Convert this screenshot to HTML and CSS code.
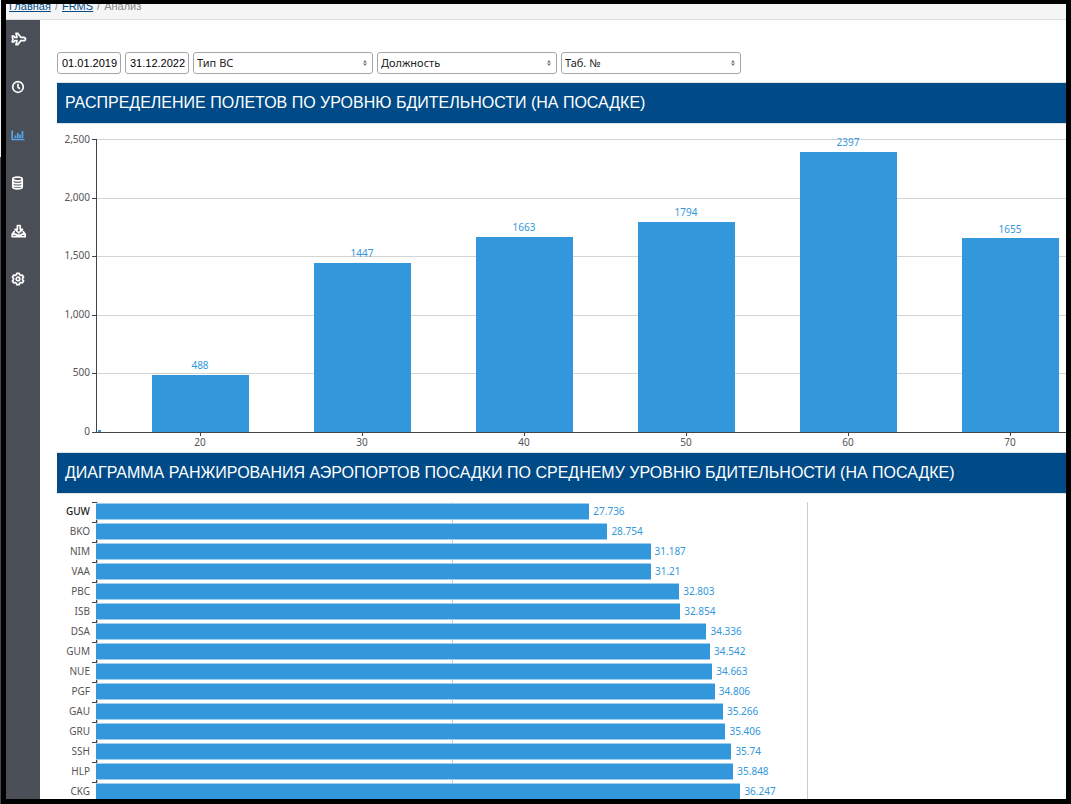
FILE: index.html
```html
<!DOCTYPE html>
<html lang="ru">
<head>
<meta charset="utf-8">
<title>FRMS — Анализ</title>
<link rel="stylesheet" href="styles.css">
</head>
<body>
<div class="window">
  <div class="screen">
    <nav class="breadcrumb" aria-label="Навигация">
      <a href="#">Главная</a><span>/</span><a href="#">FRMS</a><span>/</span><span>Анализ</span>
    </nav>
    <div class="layout">
      <nav class="sidebar" aria-label="Разделы">
        <a href="#" aria-label="Полеты"><svg viewBox="0 0 16 16"><path d="M1.200 5h1.500l1.300 1.500h2L5 2.300h1.700l3 4h2.800c1 0 2 .9 2 1.700s-1 1.700-2 1.700H9.700l-3 4H5l1-4.200H4L2.700 11H1.200l.7-3z"/></svg></a>
        <a href="#" aria-label="Время"><svg viewBox="0 0 16 16"><circle cx="7" cy="8" r="5.300"/><path d="M7 4.800v3.500l2 1.500"/></svg></a>
        <a href="#" class="active" aria-label="Анализ"><svg viewBox="0 0 16 16"><path d="M1.200 3.500v9H13.500M4.500 8.500v2.500M6.800 6v5M9.100 7.500v3.500M11.500 4v7"/></svg></a>
        <a href="#" aria-label="Данные"><svg viewBox="0 0 16 16"><ellipse cx="6.500" cy="4" rx="4.700" ry="1.900"/><path d="M1.800 4v8c0 2.600 9.400 2.600 9.400 0V4M1.800 6.700c0 2.600 9.400 2.600 9.400 0M1.800 9.400c0 2.600 9.400 2.600 9.400 0"/></svg></a>
        <a href="#" aria-label="Загрузка"><svg viewBox="0 0 16 16"><path d="M6.400 2.500h2.800v3.800h2.300L7.800 9.900 4.100 6.300h2.300zM4 8.700H3l-1.800 2.500v2.500h13v-2.500l-1.800-2.500h-1M1.200 11.200h3.600l1 1h4l1-1h3.400"/></svg></a>
        <a href="#" aria-label="Настройки"><svg viewBox="0 0 16 16"><path d="M5.800 2.300h2.400l.4 1.500 1.300.7 1.500-.4 1.200 2.100-1.100 1.100v1.400l1.100 1.100-1.200 2.100-1.500-.4-1.300.7-.4 1.500H5.800l-.4-1.500-1.300-.7-1.500.4-1.200-2.100 1.100-1.100V7.300L1.400 6.200l1.200-2.100 1.500.4 1.300-.7z"/><circle cx="7" cy="8" r="1.800"/></svg></a>
      </nav>
      <main class="content">
        <form class="filters">
          <input type="text" class="date" aria-label="Дата начала" value="01.01.2019">
          <input type="text" class="date" aria-label="Дата окончания" value="31.12.2022">
          <span class="picker"><select aria-label="Тип ВС"><option>Тип ВС</option></select><svg viewBox="0 0 4 6"><path d="M2 0l2 2.500H0zM2 6l2-2.500H0z"/></svg></span>
          <span class="picker"><select aria-label="Должность"><option>Должность</option></select><svg viewBox="0 0 4 6"><path d="M2 0l2 2.500H0zM2 6l2-2.500H0z"/></svg></span>
          <span class="picker"><select aria-label="Таб. №"><option>Таб. №</option></select><svg viewBox="0 0 4 6"><path d="M2 0l2 2.500H0zM2 6l2-2.500H0z"/></svg></span>
        </form>

        <section>
          <h2>РАСПРЕДЕЛЕНИЕ ПОЛЕТОВ ПО УРОВНЮ БДИТЕЛЬНОСТИ (НА ПОСАДКЕ)</h2>
          <svg class="columns" width="1200" height="329" role="img" aria-label="Распределение полетов">
            <path class="grid" d="M40 15.500H1200M40 74.500H1200M40 132.500H1200M40 191.500H1200M40 249.500H1200"/>
            <g class="bars">
              <rect x="41" y="306" width="3" height="2"/>
              <rect x="95" y="251" width="97" height="57"/>
              <rect x="257" y="139" width="97" height="169"/>
              <rect x="419" y="113" width="97" height="195"/>
              <rect x="581" y="98" width="97" height="210"/>
              <rect x="743" y="28" width="97" height="280"/>
              <rect x="905" y="114" width="97" height="194"/>
            </g>
            <path class="axis" d="M39.500 15V308M35 308.500H1200M35 15.500h4M35 74.500h4M35 132.500h4M35 191.500h4M35 249.500h4M143.500 308v4M305.500 308v4M467.500 308v4M629.500 308v4M791.500 308v4M953.500 308v4"/>
            <g class="y-labels">
              <text x="33" y="19">2,500</text><text x="33" y="77">2,000</text><text x="33" y="135">1,500</text><text x="33" y="194">1,000</text><text x="33" y="252">500</text><text x="33" y="311">0</text>
            </g>
            <g class="x-labels">
              <text x="143" y="322">20</text><text x="305" y="322">30</text><text x="467" y="322">40</text><text x="629" y="322">50</text><text x="791" y="322">60</text><text x="953" y="322">70</text>
            </g>
            <g class="values">
              <text x="143" y="245">488</text><text x="305" y="133">1447</text><text x="467" y="107">1663</text><text x="629" y="92">1794</text><text x="791" y="22">2397</text><text x="953" y="109">1655</text>
            </g>
          </svg>
        </section>

        <section>
          <h2>ДИАГРАММА РАНЖИРОВАНИЯ АЭРОПОРТОВ ПОСАДКИ ПО СРЕДНЕМУ УРОВНЮ БДИТЕЛЬНОСТИ (НА ПОСАДКЕ)</h2>
          <ol class="ranking">
            <li><b>GUW</b><i style="--v:27.736"></i><span>27.736</span></li>
            <li><b>BKO</b><i style="--v:28.754"></i><span>28.754</span></li>
            <li><b>NIM</b><i style="--v:31.187"></i><span>31.187</span></li>
            <li><b>VAA</b><i style="--v:31.21"></i><span>31.21</span></li>
            <li><b>PBC</b><i style="--v:32.803"></i><span>32.803</span></li>
            <li><b>ISB</b><i style="--v:32.854"></i><span>32.854</span></li>
            <li><b>DSA</b><i style="--v:34.336"></i><span>34.336</span></li>
            <li><b>GUM</b><i style="--v:34.542"></i><span>34.542</span></li>
            <li><b>NUE</b><i style="--v:34.663"></i><span>34.663</span></li>
            <li><b>PGF</b><i style="--v:34.806"></i><span>34.806</span></li>
            <li><b>GAU</b><i style="--v:35.266"></i><span>35.266</span></li>
            <li><b>GRU</b><i style="--v:35.406"></i><span>35.406</span></li>
            <li><b>SSH</b><i style="--v:35.74"></i><span>35.74</span></li>
            <li><b>HLP</b><i style="--v:35.848"></i><span>35.848</span></li>
            <li><b>CKG</b><i style="--v:36.247"></i><span>36.247</span></li>
          </ol>
        </section>
      </main>
    </div>
  </div>
</div>
</body>
</html>
```
FILE: styles.css
```css
* { box-sizing: border-box; }
body {
  margin: 0;
  font-family: "Liberation Sans", Arial, sans-serif;
  background: #fff;
}
.window {
  height: 100vh;
  padding-left: 1px;
  background: linear-gradient(#f0f0f0 157px, #454b55 157px);
}
.screen {
  display: flex;
  flex-direction: column;
  height: 100%;
  border: 5px solid #000;
  border-top-width: 4px;
  background: #fff;
  overflow: hidden;
}
.breadcrumb {
  display: flex;
  flex: none;
  align-items: flex-end;
  gap: 4px;
  height: 16px;
  padding: 0 3px 6px;
  overflow: hidden;
  background: #f5f5f5;
  border-bottom: 1px solid #dcdcdc;
  color: #888;
  font-size: 11px;
  line-height: 14px;
}
.breadcrumb a { color: #004b87; }
.layout {
  display: flex;
  flex: 1;
  min-height: 0;
}
.sidebar {
  display: flex;
  flex: none;
  flex-direction: column;
  gap: 32px;
  width: 34px;
  padding: 11px 5px;
  background: #4a4e57;
}
.sidebar a {
  height: 16px;
  color: #fff;
}
.sidebar .active { color: #55a5e8; }
.sidebar svg {
  display: block;
  width: 16px;
  height: 16px;
  fill: none;
  stroke: currentColor;
  stroke-width: 1.7;
  stroke-linejoin: round;
}
.content {
  flex: 1;
  min-width: 0;
  padding: 32px 0 0 17px;
  overflow: hidden;
}
.filters {
  display: flex;
  gap: 4px;
  margin-bottom: 8px;
}
.date, .picker select {
  height: 22px;
  border: 1px solid #a6a6a6;
  border-radius: 3px;
  background: #fff;
  color: #000;
}
.date {
  width: 64px;
  padding: 0 2px 0 4px;
  font: 11px "Liberation Sans", Arial, sans-serif;
}
.picker {
  position: relative;
  width: 180px;
}
.picker select {
  display: block;
  width: 100%;
  padding: 0 3px 2px;
  appearance: none;
  color: #222;
  font: 11px "Noto Sans", sans-serif;
}
.picker svg {
  position: absolute;
  top: 8px;
  right: 6px;
  width: 4px;
  height: 6px;
  fill: #777;
  pointer-events: none;
}
h2 {
  height: 42px;
  margin: 0;
  padding: 0 8px;
  border: 1px solid #dfe3e6;
  border-width: 1px 0;
  background: #004b87;
  color: #fff;
  font-size: 16px;
  font-weight: 400;
  line-height: 40px;
  white-space: nowrap;
}
.columns {
  display: block;
  margin-bottom: -1px;
  font: 10px "Noto Sans", sans-serif;
}
.grid { stroke: #d4d4d4; fill: none; }
.bars { fill: #3398db; }
.axis { stroke: #444; fill: none; }
.y-labels { fill: #555; text-anchor: end; }
.x-labels { fill: #555; text-anchor: middle; }
.values { fill: #3398db; text-anchor: middle; }
.ranking {
  margin: 8px 0 0;
  padding: 0;
  list-style: none;
  background: linear-gradient(90deg, #ccc 1px, transparent 1px) 40px 0 / 355px 100%;
  font: 10px/18px "Noto Sans", sans-serif;
}
.ranking li {
  display: flex;
  height: 20px;
  background: linear-gradient(#444, #444) 35px 0 / 5px 1px no-repeat, linear-gradient(#444, #444) 39px 0 / 1px 100% no-repeat;
}
.ranking b {
  width: 39px;
  padding-right: 6px;
  color: #555;
  font-weight: 400;
  text-align: right;
}
.ranking li:first-child b { font-weight: 500; color: #222; }
.ranking i {
  width: calc(var(--v) * 355px / 20 + 1px);
  height: 17px;
  margin: 1px 4px 0 0;
  border: 1px solid #9fcfee;
  border-width: 1px 0;
  background: #3398db;
}
.ranking span { color: #3398db; }
```
